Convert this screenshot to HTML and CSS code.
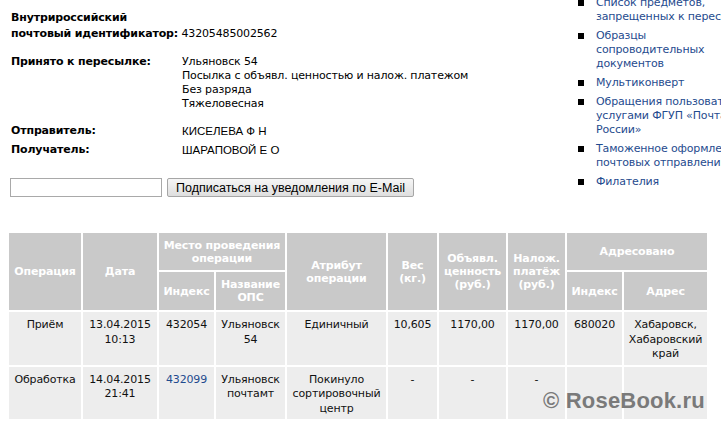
FILE: index.html
```html
<!DOCTYPE html>
<html lang="ru">
<head>
    <meta charset="UTF-8">
    <title>Отслеживание почтовых отправлений</title>
    <link rel="stylesheet" href="styles.css">
</head>
<body>
    <div class="page">
        <div class="top">
            <div class="info">
                <p class="ident">
                    <b>Внутрироссийский<br>почтовый идентификатор:</b> 43205485002562
                </p>

                <div class="fields">
                    <div class="label">Принято к пересылке:</div>
                    <div class="value">
                        Ульяновск 54<br>
                        Посылка с объявл. ценностью и налож. платежом<br>
                        Без разряда<br>
                        Тяжеловесная
                    </div>
                </div>

                <div class="fields people">
                    <div class="label">Отправитель:</div>
                    <div class="value name">КИСЕЛЕВА Ф Н</div>
                    <div class="label">Получатель:</div>
                    <div class="value name">ШАРАПОВОЙ Е О</div>
                </div>

                <form class="subscribe" onsubmit="return false;">
                    <input type="text" class="email">
                    <button type="submit">Подписаться на уведомления по E-Mail</button>
                </form>
            </div>

            <ul class="links">
                <li><a href="#">Список предметов,<br>запрещенных к пересылке</a></li>
                <li><a href="#">Образцы<br>сопроводительных<br>документов</a></li>
                <li><a href="#">Мультиконверт</a></li>
                <li><a href="#">Обращения пользователей<br>услугами ФГУП «Почта<br>России»</a></li>
                <li><a href="#">Таможенное оформление<br>почтовых отправлений</a></li>
                <li><a href="#">Филателия</a></li>
            </ul>
        </div>

        <table class="ops">
            <colgroup>
                <col style="width: 72px">
                <col style="width: 74px">
                <col style="width: 55px">
                <col style="width: 69px">
                <col style="width: 99px">
                <col style="width: 49px">
                <col style="width: 67px">
                <col style="width: 57px">
                <col style="width: 55px">
                <col style="width: 83px">
            </colgroup>
            <thead>
                <tr class="head-top">
                    <th rowspan="2">Операция</th>
                    <th rowspan="2">Дата</th>
                    <th colspan="2">Место проведения операции</th>
                    <th rowspan="2">Атрибут<br>операции</th>
                    <th rowspan="2">Вес<br>(кг.)</th>
                    <th rowspan="2">Объявл.<br>ценность<br>(руб.)</th>
                    <th rowspan="2">Налож.<br>платёж<br>(руб.)</th>
                    <th colspan="2">Адресовано</th>
                </tr>
                <tr class="head-sub">
                    <th>Индекс</th>
                    <th>Название<br>ОПС</th>
                    <th>Индекс</th>
                    <th>Адрес</th>
                </tr>
            </thead>
            <tbody>
                <tr>
                    <td>Приём</td>
                    <td>13.04.2015<br>10:13</td>
                    <td>432054</td>
                    <td>Ульяновск<br>54</td>
                    <td>Единичный</td>
                    <td>10,605</td>
                    <td>1170,00</td>
                    <td>1170,00</td>
                    <td>680020</td>
                    <td>Хабаровск,<br>Хабаровский<br>край</td>
                </tr>
                <tr>
                    <td>Обработка</td>
                    <td>14.04.2015<br>21:41</td>
                    <td><a href="#">432099</a></td>
                    <td>Ульяновск<br>почтамт</td>
                    <td>Покинуло<br>сортировочный<br>центр</td>
                    <td>-</td>
                    <td>-</td>
                    <td>-</td>
                    <td></td>
                    <td></td>
                </tr>
            </tbody>
        </table>

        <div class="rule"></div>
    </div>

    <div class="watermark">© RoseBook.ru</div>
</body>
</html>
```

FILE: styles.css
```css
* {
    margin: 0;
    padding: 0;
    box-sizing: border-box;
}

html, body {
    overflow: hidden;
}

body {
    background: #fff;
    color: #000;
    font-family: "DejaVu Sans", Verdana, sans-serif;
    font-size: 11px;
    line-height: 14px;
    letter-spacing: -0.15px;
}

a {
    color: #1f4b8e;
    text-decoration: none;
}

.page {
    width: 900px;
    padding-left: 8px;
}

.top {
    display: flex;
}

.info {
    flex: none;
    width: 570px;
    padding: 10px 0 0 3px;
}

.ident {
    line-height: 16px;
}

.fields {
    display: grid;
    grid-template-columns: 171px auto;
    margin-top: 13px;
}

.label {
    font-weight: bold;
}

.people {
    row-gap: 5px;
}

.name {
    font-family: "Liberation Sans", Arial, sans-serif;
    font-size: 11.5px;
    letter-spacing: 0;
}

.subscribe {
    display: flex;
    gap: 5px;
    margin: 21px 0 0 -1px;
}

.email {
    width: 152px;
    height: 19px;
    border: 1px solid #a9a9a9;
    background: #fff;
}

.subscribe button {
    height: 19px;
    padding: 0 8px;
    border: 1px solid #a6a6a6;
    border-radius: 2px;
    background: linear-gradient(#f6f6f6, #dedede);
    font-family: "Liberation Sans", Arial, sans-serif;
    font-size: 12.5px;
    letter-spacing: 0;
    color: #000;
}

.links {
    list-style: none;
    margin-top: -4px;
    width: 260px;
}

.links li {
    display: flex;
    margin-bottom: 5px;
    white-space: nowrap;
}

.links li::before {
    content: "";
    flex: none;
    width: 6px;
    height: 6px;
    margin: 4px 12px 0 0;
    background: #000;
}

.ops {
    margin: 34px 0 0 -1px;
    border-collapse: separate;
    border-spacing: 2px;
    table-layout: fixed;
    width: 702px;
}

.ops th {
    background: #c9c9c9;
    color: #fff;
    font-weight: bold;
    line-height: 13px;
    text-align: center;
    vertical-align: middle;
}

.head-top th {
    height: 37px;
}

.head-sub th {
    height: 38px;
}

.ops td {
    background: #ededed;
    color: #111;
    text-align: center;
    vertical-align: top;
    padding: 6px 2px 3px;
    line-height: 14.5px;
}

.rule {
    width: 522px;
    height: 1px;
    margin-top: 14px;
    background: #dde1e6;
}

.watermark {
    position: absolute;
    left: 543px;
    top: 394px;
    font-family: "Liberation Sans", Arial, sans-serif;
    font-size: 22px;
    font-weight: bold;
    color: #7a7a7a;
    letter-spacing: 0.2px;
}
```
